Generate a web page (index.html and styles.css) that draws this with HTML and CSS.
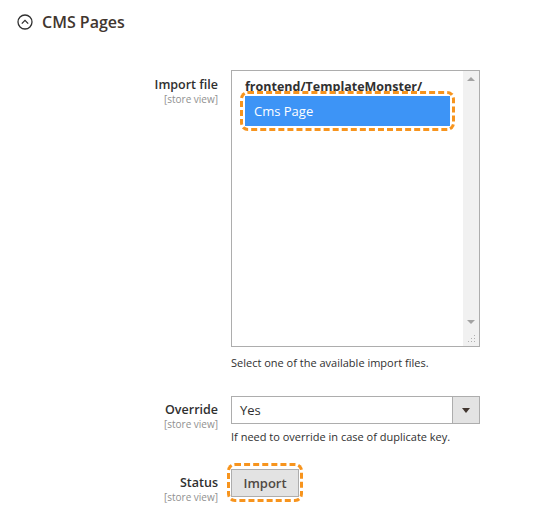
FILE: index.html
```html
<!DOCTYPE html>
<html>
<head>
<meta charset="utf-8">
<link rel="stylesheet" href="styles.css">
</head>
<body>
<div class="section-title">
  <span class="toggle-icon">
    <svg width="16" height="16" viewBox="0 0 16 16"><circle cx="8" cy="8" r="7" fill="none" stroke="#303030" stroke-width="1.3"/><path d="M4.8 9.6 L8 6.4 L11.2 9.6" fill="none" stroke="#303030" stroke-width="1.3"/></svg>
  </span>
  <span class="title-text">CMS Pages</span>
</div>

<div class="form">
  <div class="row row-file">
    <div class="label-col">
      <div class="label">Import file</div>
      <div class="scope">[store view]</div>
    </div>
    <div class="control-col">
      <div class="listbox">
        <div class="list-items">
          <div class="optgroup">frontend/TemplateMonster/</div>
          <div class="option selected hl">Cms Page</div>
        </div>
        <div class="scrollbar">
          <span class="arrow up"></span>
          <span class="arrow down"></span>
        </div>
        <span class="grip">
          <svg width="8" height="8" viewBox="0 0 8 8"><g fill="#b0b0b0"><rect x="6" y="0" width="1" height="1"/><rect x="3" y="3" width="1" height="1"/><rect x="6" y="3" width="1" height="1"/><rect x="0" y="6" width="1" height="1"/><rect x="3" y="6" width="1" height="1"/><rect x="6" y="6" width="1" height="1"/></g></svg>
        </span>
      </div>
      <div class="note">Select one of the available import files.</div>
    </div>
  </div>

  <div class="row row-override">
    <div class="label-col">
      <div class="label">Override</div>
      <div class="scope">[store view]</div>
    </div>
    <div class="control-col">
      <div class="select">
        <span class="select-value">Yes</span>
        <span class="select-btn"><span class="caret"></span></span>
      </div>
      <div class="note">If need to override in case of duplicate key.</div>
    </div>
  </div>

  <div class="row row-status">
    <div class="label-col">
      <div class="label">Status</div>
      <div class="scope">[store view]</div>
    </div>
    <div class="control-col">
      <button class="btn hl">Import</button>
    </div>
  </div>
</div>
</body>
</html>
```

FILE: styles.css
```css
* { box-sizing: border-box; }
html, body { margin: 0; padding: 0; background: #fff; }
body {
  font-family: "Open Sans", "Liberation Sans", sans-serif;
  color: #303030;
  width: 536px;
  height: 509px;
  overflow: hidden;
}
.section-title {
  display: flex;
  align-items: center;
  padding: 9px 0 0 17px;
  height: 34px;
}
.toggle-icon { display: flex; width: 16px; height: 16px; margin-right: 9px; }
.title-text {
  font-size: 16px;
  font-weight: 600;
  color: #41362f;
}
.form { padding-top: 36px; }
.row { display: flex; }
.label-col {
  width: 218px;
  text-align: right;
  flex-shrink: 0;
}
.label {
  font-size: 12.5px;
  font-weight: 600;
  color: #303030;
  line-height: 16px;
}
.scope {
  font-size: 10px;
  color: #909090;
  line-height: 12px;
}
.control-col {
  margin-left: 13px;
  width: 249px;
}
.row-file .label-col { padding-top: 7px; }
.listbox {
  position: relative;
  height: 277px;
  border: 1px solid #adadad;
  display: flex;
  background: #fff;
}
.list-items {
  flex: 1;
  padding: 7px 13px 0 13px;
}
.optgroup {
  font-size: 12.5px;
  font-weight: 700;
  color: #303030;
  line-height: 18px;
}
.option {
  font-size: 13px;
  line-height: 30px;
  height: 30px;
  padding-left: 9px;
  position: relative;
}
.option.selected {
  background: #3d94f6;
  color: #fff;
}
.scrollbar {
  width: 16px;
  background: #f1f1f1;
  position: relative;
}
.arrow {
  position: absolute;
  left: 4px;
  width: 0;
  height: 0;
  border-left: 4px solid transparent;
  border-right: 4px solid transparent;
}
.arrow.up { top: 6px; border-bottom: 4px solid #a3a3a3; }
.arrow.down { bottom: 22px; border-top: 4px solid #a3a3a3; }
.grip {
  position: absolute;
  right: 3px;
  bottom: 3px;
  display: flex;
}
.hl::after {
  content: "";
  position: absolute;
  top: -5px;
  left: -5px;
  right: -5px;
  bottom: -5px;
  border: 3px dashed #f7941d;
  border-radius: 8px;
  pointer-events: none;
}
.note {
  font-size: 11px;
  line-height: 14px;
  color: #303030;
  margin-top: 9px;
}
.row-override { margin-top: 26px; }
.row-override .label-col { padding-top: 6px; }
.select {
  height: 28px;
  border: 1px solid #adadad;
  display: flex;
  align-items: stretch;
}
.select-value {
  flex: 1;
  font-size: 13px;
  line-height: 26px;
  padding-left: 8px;
  color: #303030;
}
.select-btn {
  width: 27px;
  background: #e3e3e3;
  border-left: 1px solid #adadad;
  display: flex;
  align-items: center;
  justify-content: center;
}
.caret {
  width: 0; height: 0;
  border-left: 4px solid transparent;
  border-right: 4px solid transparent;
  border-top: 5px solid #41362f;
}
.row-override .note { margin-top: 6px; }
.row-status { margin-top: 25px; }
.row-status .label-col { padding-top: 6px; }
.btn {
  position: relative;
  width: 68px;
  height: 28px;
  border: 1px solid #adadad;
  background: #e3e3e3;
  font-family: "Open Sans", "Liberation Sans", sans-serif;
  font-size: 13px;
  font-weight: 600;
  color: #514943;
  padding: 0;
}
.btn.hl::after {
  top: -7px;
  bottom: -6px;
}
```
